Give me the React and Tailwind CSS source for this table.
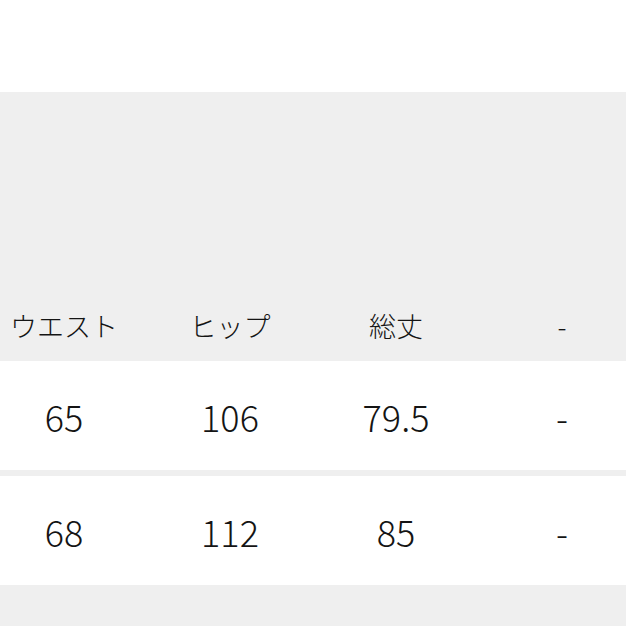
const headers = ['ウエスト', 'ヒップ', '総丈', '-']
const rows = [
  ['65', '106', '79.5', '-'],
  ['68', '112', '85', '-'],
]

function Cells({ items, className }) {
  return items.map((v, i) => (
    <div key={i} className={'w-[166px] shrink-0 text-center ' + className}>
      {v}
    </div>
  ))
}

export default function App() {
  return (
    <div
      className="w-[626px] h-[626px] overflow-hidden bg-[#efefef] text-[#141414] font-light"
      style={{ fontFamily: '"Noto Sans CJK JP", "Noto Sans", sans-serif' }}
    >
      <div className="h-[92px] bg-white" />
      <div className="h-[269px] flex items-end pb-[20px] -ml-[19px]">
        <Cells items={headers} className="text-[27px] leading-[30px]" />
      </div>
      <div className="h-[109px] bg-white flex items-center -ml-[19px]">
        <Cells items={rows[0]} className="text-[36px] leading-[40px]" />
      </div>
      <div className="h-[6px]" />
      <div className="h-[109px] bg-white flex items-center -ml-[19px]">
        <Cells items={rows[1]} className="text-[36px] leading-[40px]" />
      </div>
    </div>
  )
}
